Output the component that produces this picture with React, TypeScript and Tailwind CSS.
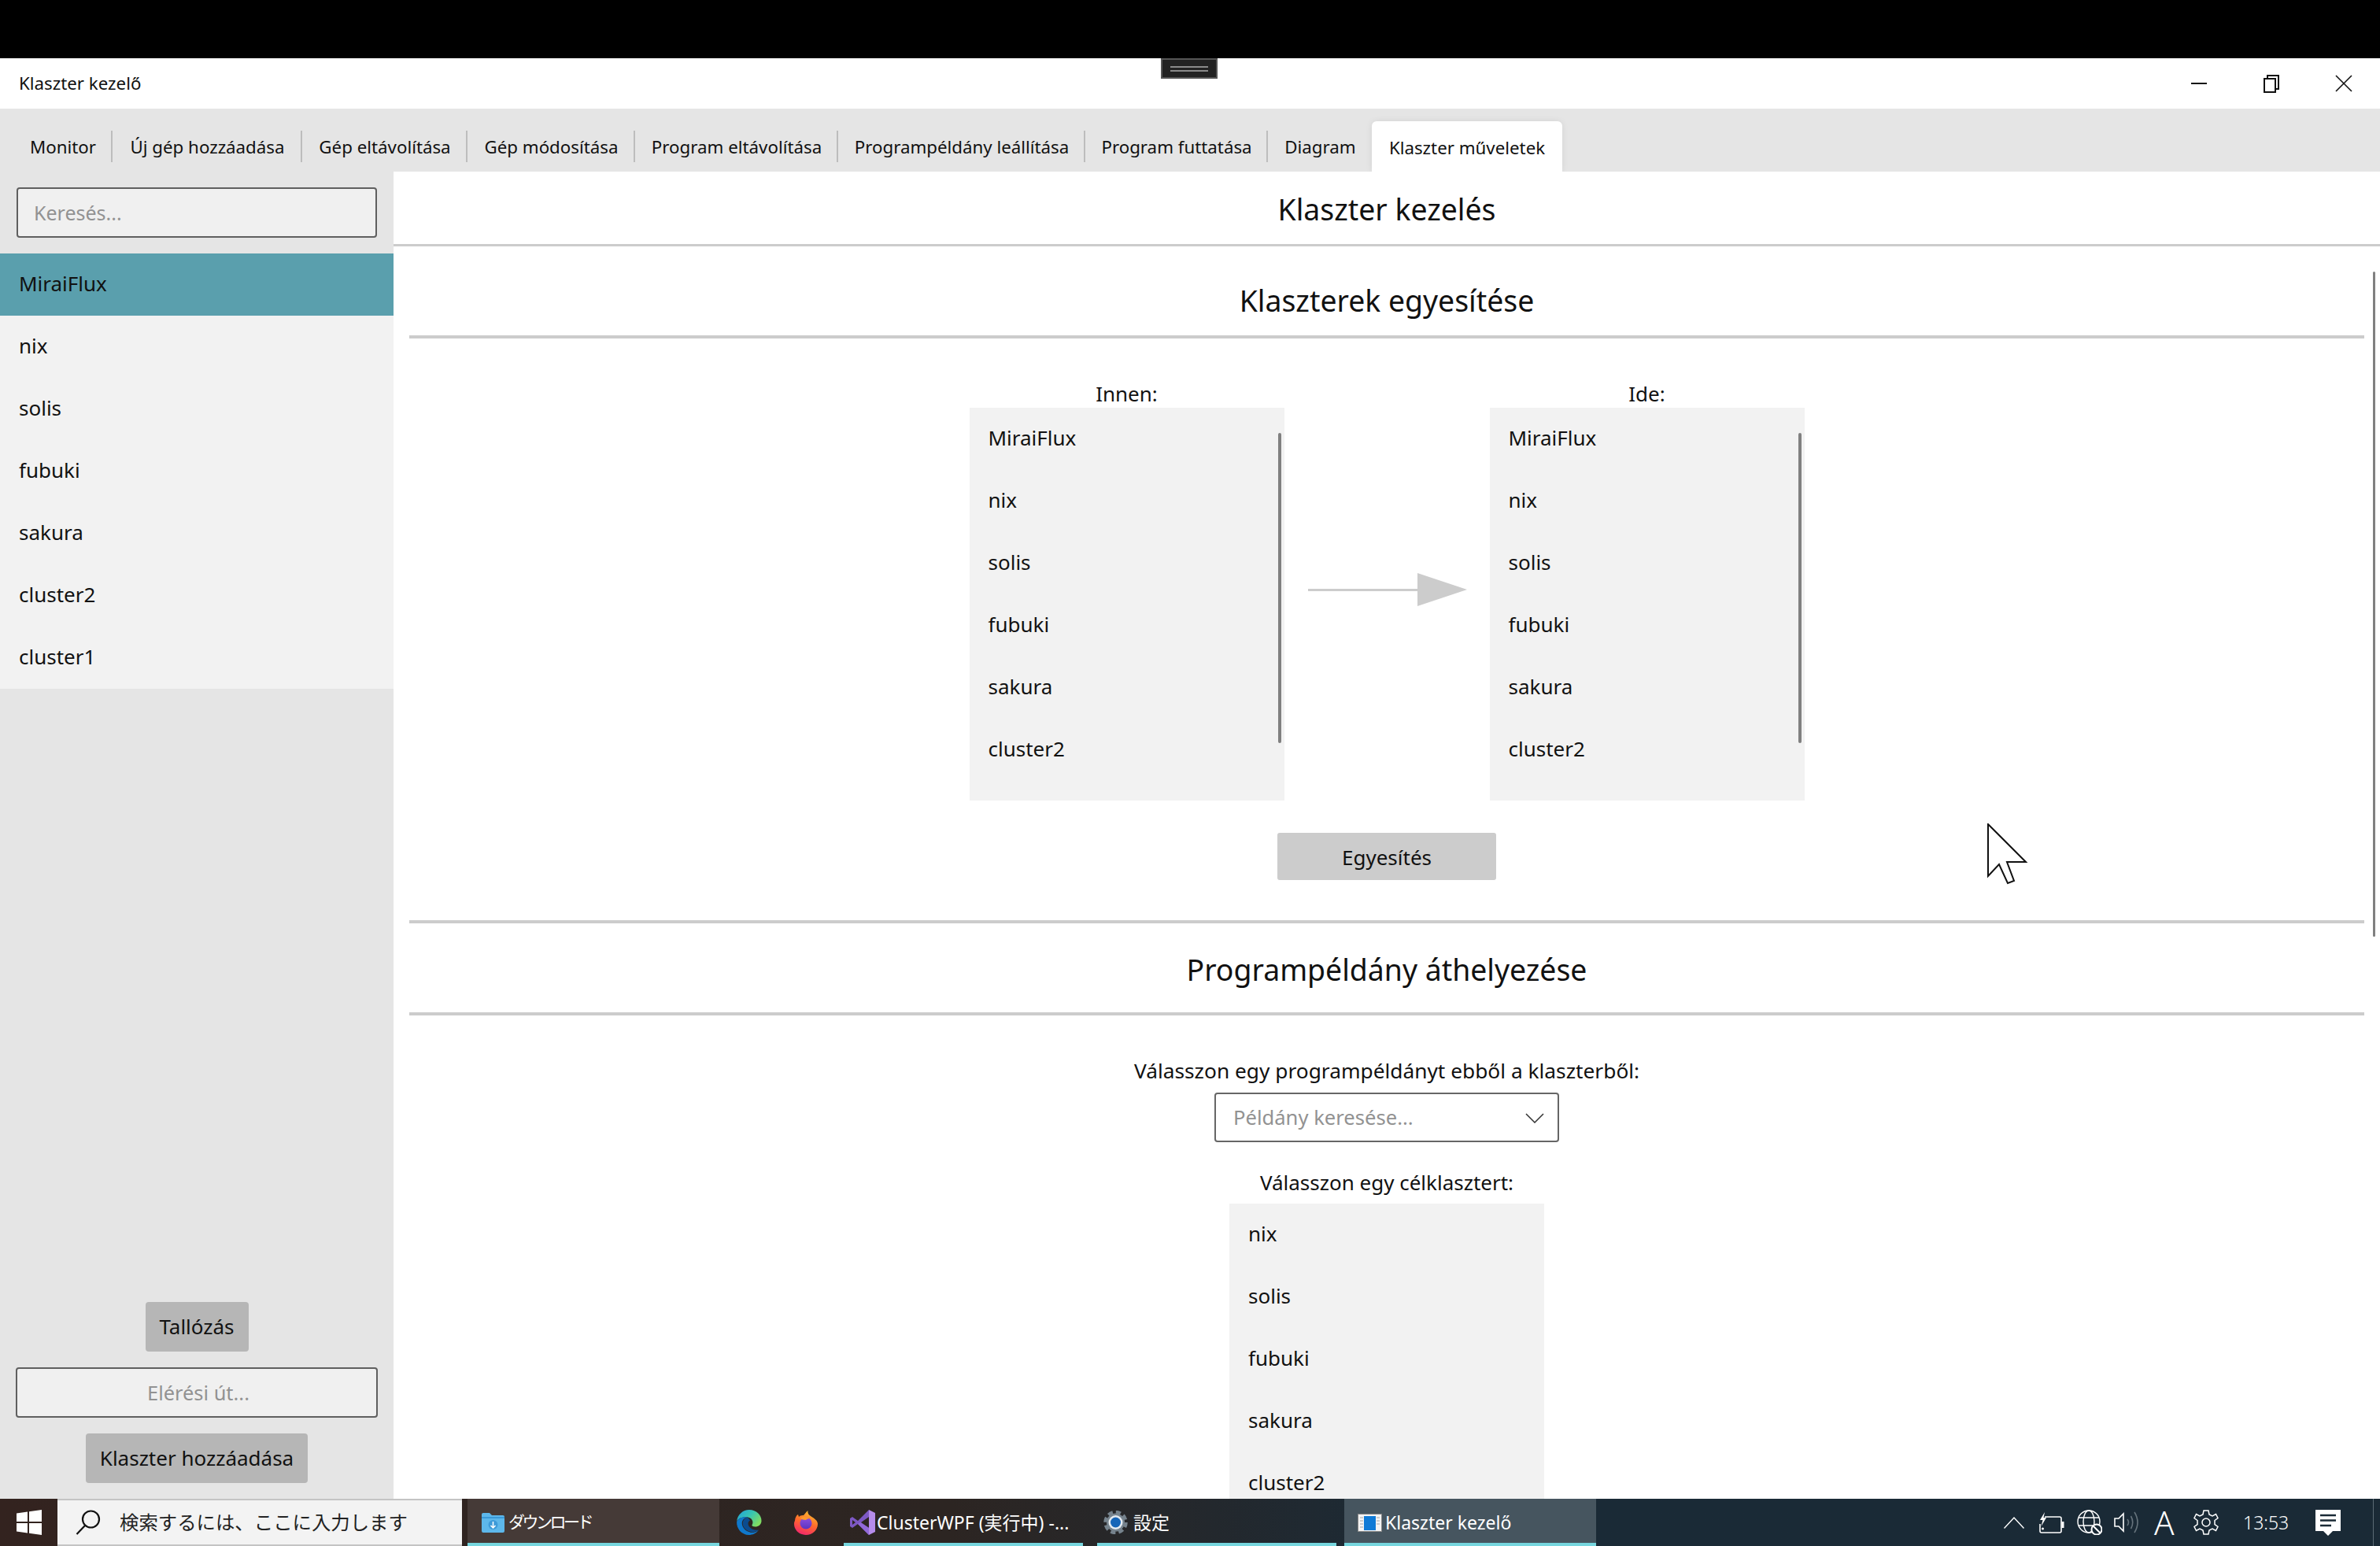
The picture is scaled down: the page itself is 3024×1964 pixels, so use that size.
import React from 'react';

const tabs = [
  { label: 'Monitor', width: 'w-[129px] pl-[5px] border-r-2' },
  { label: 'Új gép hozzáadása', width: 'w-[241px] pl-[2px] border-r-2' },
  { label: 'Gép eltávolítása', width: 'w-[210px] pl-[2px] border-r-2' },
  { label: 'Gép módosítása', width: 'w-[213px] pl-[2px] border-r-2' },
  { label: 'Program eltávolítása', width: 'w-[258px] pl-[2px] border-r-2' },
  { label: 'Programpéldány leállítása', width: 'w-[314px] pl-[2px] border-r-2' },
  { label: 'Program futtatása', width: 'w-[232px] pl-[2px] border-r-2' },
  { label: 'Diagram', width: 'w-[131px] pl-[2px]' },
];

const clusters = ['MiraiFlux', 'nix', 'solis', 'fubuki', 'sakura', 'cluster2', 'cluster1'];

const ListRow = ({ name, selected = false }: { name: string; selected?: boolean }) => (
  <div className={`flex h-[79px] shrink-0 items-center pb-[3px] pl-[24px] ${selected ? 'bg-[#5a9fad]' : ''}`}>{name}</div>
);

const ListBox = ({ items, height, scrollbar = false }: { items: string[]; height: string; scrollbar?: boolean }) => (
  <div className={`relative w-[400px] shrink-0 overflow-hidden bg-[#f2f2f2] ${height}`}>
    {items.map((item) => (
      <ListRow key={item} name={item} />
    ))}
    {scrollbar && <div className="absolute top-[32px] right-[4px] h-[394px] w-[4px] rounded-full bg-[#808080]" />}
  </div>
);

const SectionTitle = ({ title, pad }: { title: string; pad: string }) => (
  <div className={`mx-[20px] flex h-[117px] shrink-0 items-center justify-center border-b-4 border-[#cccccc] text-[37.4px] ${pad}`}>
    {title}
  </div>
);

const TaskTile = ({ width, active = false, children }: { width: string; active?: boolean; children: React.ReactNode }) => (
  <div className={`relative flex h-full shrink-0 items-center ${width} ${active ? 'bg-[#46555f]' : ''}`}>
    {children}
    <div className="absolute right-0 bottom-0 left-0 h-[4px] bg-[#76d6de]" />
  </div>
);

const Sidebar = () => (
  <aside className="flex w-[500px] shrink-0 flex-col bg-[#e5e5e5]">
    <div className="mx-[21px] mt-[20px] flex h-[64px] items-center rounded-[4px] border-2 border-[#5f5f5f] bg-[#f0f0f0] pt-[1px] pl-[20px] text-[25px] text-[#929292]">
      Keresés...
    </div>
    <div className="mt-[20px] bg-[#f2f2f2]">
      {clusters.map((name, index) => (
        <ListRow key={name} name={name} selected={index === 0} />
      ))}
    </div>
    <div className="mt-auto flex flex-col items-center gap-[20px] pb-[20px]">
      <div className="flex h-[63px] w-[131px] items-center justify-center rounded-[4px] bg-[#b6b6b6]">Tallózás</div>
      <div className="flex h-[64px] w-[460px] items-center justify-center rounded-[4px] border-2 border-[#5f5f5f] bg-[#f0f0f0] pl-[4px] text-[25.4px] text-[#929292]">
        Elérési út...
      </div>
      <div className="flex h-[63px] w-[282px] items-center justify-center rounded-[4px] bg-[#b6b6b6]">Klaszter hozzáadása</div>
    </div>
  </aside>
);

const Content = () => (
  <main className="relative flex min-w-0 flex-1 flex-col overflow-hidden bg-white">
    <div className="flex h-[95px] shrink-0 items-center justify-center border-b-[3px] border-[#cccccc] pt-[4px] text-[37.4px]">
      Klaszter kezelés
    </div>

    <SectionTitle title="Klaszterek egyesítése" pad="pt-[26px]" />
    <div className="mt-[52px] flex shrink-0 justify-center">
      <div className="flex w-[400px] flex-col items-center">
        <div className="h-[36px] leading-[36px]">Innen:</div>
        <ListBox items={clusters.slice(0, 6)} height="h-[499px]" scrollbar />
      </div>
      <div className="flex w-[261px] items-center justify-center pt-[36px] pb-[37px] pl-[1px]">
        <svg width="202" height="42" viewBox="0 0 202 42" fill="#cccccc">
          <rect x="0" y="20" width="140" height="3" />
          <polygon points="139,0 202,21 139,42" />
        </svg>
      </div>
      <div className="flex w-[400px] flex-col items-center">
        <div className="h-[36px] leading-[36px]">Ide:</div>
        <ListBox items={clusters.slice(0, 6)} height="h-[499px]" scrollbar />
      </div>
    </div>
    <div className="mx-auto mt-[41px] flex h-[60px] w-[278px] shrink-0 items-center justify-center rounded-[3px] bg-[#cccccc] pt-[2px]">
      Egyesítés
    </div>
    <div className="mx-[20px] mt-[51px] h-[4px] shrink-0 bg-[#cccccc]" />

    <SectionTitle title="Programpéldány áthelyezése" pad="pt-[6px]" />
    <div className="mt-[52px] h-[36px] shrink-0 text-center text-[26.3px] leading-[36px]">
      Válasszon egy programpéldányt ebből a klaszterből:
    </div>
    <div className="mx-auto mt-[10px] flex h-[63px] w-[438px] shrink-0 items-center justify-between rounded-[4px] border-2 border-[#666666] pt-[1px] pr-[17px] pl-[22px] text-[25.6px] text-[#929292]">
      Példány keresése...
      <svg width="24" height="13" viewBox="0 0 24 13" fill="none" stroke="#333333" strokeWidth="1.5">
        <polyline points="1,1 12,12 23,1" />
      </svg>
    </div>
    <div className="mt-[33px] h-[36px] shrink-0 text-center leading-[36px]">Válasszon egy célklasztert:</div>
    <div className="mx-auto mt-[9px]">
      <ListBox items={clusters.slice(1, 6)} height="h-[400px]" />
    </div>

    {/* Page scrollbar */}
    <div className="absolute top-[127px] right-[6px] h-[845px] w-[3px] rounded-full bg-[#808080]" />

    {/* Mouse pointer */}
    <svg className="absolute top-[828px] left-[2024px]" width="54" height="78" viewBox="0 0 54 78" fill="white" stroke="#111111" strokeWidth="2">
      <path d="M2 1 V67 L16 52 L27 76 L35 73 L26 49 H50 Z" />
    </svg>
  </main>
);

const EdgeIcon = () => (
  <svg width="33" height="32" viewBox="0 0 32 32" className="shrink-0">
    <defs>
      <linearGradient id="edge-top" x1="0" y1="0" x2="1" y2="0.6">
        <stop offset="0" stopColor="#1f9fe0" />
        <stop offset="0.55" stopColor="#38c6b0" />
        <stop offset="1" stopColor="#7fdc62" />
      </linearGradient>
    </defs>
    <path d="M0.6 15 C1.5 6 8.5 0 16.5 0 C25.5 0 32 6.5 32 14 C32 19 28 21.5 24 21.5 C21.5 21.5 20 20.5 19.8 19.5 C22 17 21.5 11 15 9.5 C8 8.5 2 11 0.6 15 Z" fill="url(#edge-top)" />
    <path d="M0.6 15 C3 10.5 9 8.5 14 9.5 C9 10.5 6.5 14.5 7.5 19 C9 26 17 30 23 28.5 C25 28 26.5 27 28.5 25.5 C25.5 30 20.5 32 16 32 C7 32 0 24 0.6 15 Z" fill="#0f78cc" />
    <path d="M14 9.5 C9.5 11 7.5 15 8.5 19.5 C10 25.5 17 29 23 28 C25 27.6 27 26.6 28.5 25.5 C24.5 26.5 19 25 16.5 21.5 C14.5 18.5 14.5 15 17.5 13.5 C16.5 11.5 15.5 10.5 14 9.5 Z" fill="#0b4c8f" />
  </svg>
);

const FirefoxIcon = () => (
  <svg width="30" height="31" viewBox="0 0 30 31" className="shrink-0">
    <defs>
      <linearGradient id="fx-body" x1="0.7" y1="0" x2="0.3" y2="1">
        <stop offset="0" stopColor="#ffc42e" />
        <stop offset="0.5" stopColor="#ff6a2c" />
        <stop offset="1" stopColor="#f2246e" />
      </linearGradient>
      <linearGradient id="fx-globe" x1="0.5" y1="0" x2="0.5" y2="1">
        <stop offset="0" stopColor="#8f4fe0" />
        <stop offset="1" stopColor="#5a35c0" />
      </linearGradient>
    </defs>
    <path d="M1 13 C1 9 3 6 5 5 L6 8 C8 6 10 6 12 6 C14 4 15 2 17.5 0 C17 3 18 5 21 7 C26 10 30 13 30 17 C30 25 23 31 15 31 C7 31 0 25 0 17 C0 15 0.4 14 1 13 Z" fill="url(#fx-body)" />
    <circle cx="15" cy="16" r="7.5" fill="url(#fx-globe)" />
    <path d="M8 10 C11 7 17 8 20 10 C17 10 16 11 15 12 C12 12 10 11 8 10 Z" fill="#ff9a2c" />
  </svg>
);

const VisualStudioIcon = () => (
  <svg width="32" height="32" viewBox="0 0 32 32" className="shrink-0">
    <path fillRule="evenodd" d="M0 11 L3 9 L10 14 L24 0 V9 L14 16 L24 23 V32 L10 18 L3 23 L0 21 Z M3 13 V19 L7 16 Z" fill="#7d58c4" />
    <path d="M24 0 L32 4 V28 L24 32 Z" fill="#b58ceb" />
    <path d="M24 23 V32 L10 18 L13 16 Z" fill="#9269d8" />
  </svg>
);

const SettingsAppIcon = () => (
  <svg width="31" height="30" viewBox="0 0 31 30" className="shrink-0">
    <circle cx="15.5" cy="15" r="11.5" fill="#76838d" />
    <circle cx="15.5" cy="15" r="13" fill="none" stroke="#76838d" strokeWidth="4.5" strokeDasharray="6.2 4" />
    <circle cx="15.5" cy="15" r="9" fill="#e4ebf1" />
    <circle cx="15.5" cy="15" r="6.5" fill="#1565b8" />
  </svg>
);

const WindowAppIcon = () => (
  <svg width="31" height="23" viewBox="0 0 31 23" className="shrink-0">
    <rect x="0.5" y="0.5" width="30" height="22" fill="#f4f4f4" stroke="#8a8a8a" />
    <rect x="8" y="3" width="15" height="18" fill="#0f7ad6" />
    <path d="M3 5 H7 M3 9 H7 M3 13 H7 M3 17 H7 M24 5 H28 M24 9 H28 M24 13 H28" stroke="#a5a5a5" strokeWidth="1.2" />
  </svg>
);

const Taskbar = () => (
  <footer className="flex h-[60px] shrink-0 items-center bg-gradient-to-r from-[#33231f] via-[#2c2522] via-40% to-[#1a2a36] to-60% text-[23px] text-white">
    <div className="flex w-[73px] shrink-0 items-center justify-center">
      <svg width="32" height="32" viewBox="0 0 32 32" fill="white">
        <polygon points="0,4.5 14,2.6 14,15 0,15" />
        <polygon points="16,2.3 32,0 32,15 16,15" />
        <polygon points="0,17 14,17 14,29.4 0,27.5" />
        <polygon points="16,17 32,17 32,32 16,29.7" />
      </svg>
    </div>
    <div className="flex h-full w-[514px] shrink-0 items-center border-y-2 border-[#c4c4c4] bg-[#f3f3f3] pl-[23px] text-[24.4px] text-[#222222]">
      <svg width="32" height="32" viewBox="0 0 32 32" fill="none" stroke="#111111" strokeWidth="2.2" className="mr-[24px] shrink-0">
        <circle cx="19.5" cy="12" r="10.5" />
        <line x1="12" y1="20" x2="1.5" y2="31" />
      </svg>
      検索するには、ここに入力します
    </div>

    <div className="ml-[7px] h-full">
      <TaskTile width="w-[320px] bg-[#453a37]">
        <svg width="29" height="25" viewBox="0 0 29 25" className="mr-[5px] ml-[18px] shrink-0">
          <path d="M0 2 Q0 0 2 0 H10 L13 3 H27 Q29 3 29 5 V23 Q29 25 27 25 H2 Q0 25 0 23 Z" fill="#5db7ea" />
          <path d="M0 6 H29" stroke="#2f8fd0" strokeWidth="1.5" />
          <circle cx="14.5" cy="15" r="6" fill="#3d9ad8" />
          <path d="M14.5 11 V19 M11.5 16 L14.5 19 L17.5 16" stroke="white" strokeWidth="1.5" fill="none" />
        </svg>
        <span className="text-[21px] tracking-[-3.5px]">ダウンロード</span>
      </TaskTile>
    </div>

    <div className="ml-[21px] shrink-0">
      <EdgeIcon />
    </div>
    <div className="ml-[41px] shrink-0">
      <FirefoxIcon />
    </div>

    <div className="ml-[33px] h-full">
      <TaskTile width="w-[304px]">
        <div className="mr-[2px] ml-[8px]">
          <VisualStudioIcon />
        </div>
        ClusterWPF (実行中) -...
      </TaskTile>
    </div>
    <div className="ml-[18px] h-full">
      <TaskTile width="w-[304px]">
        <div className="mr-[7px] ml-[8px]">
          <SettingsAppIcon />
        </div>
        設定
      </TaskTile>
    </div>
    <div className="ml-[10px] h-full">
      <TaskTile width="w-[320px]" active>
        <div className="mr-[4px] ml-[17px]">
          <WindowAppIcon />
        </div>
        Klaszter kezelő
      </TaskTile>
    </div>

    {/* Tray */}
    <div className="ml-[518px] flex h-full shrink-0 items-center">
      <svg width="26" height="15" viewBox="0 0 26 15" fill="none" stroke="white" strokeWidth="1.4">
        <polyline points="0.5,14.5 13,1 25.5,14.5" />
      </svg>
      <svg width="32" height="27" viewBox="0 0 32 27" fill="none" stroke="white" strokeWidth="1.6" className="ml-[19px]">
        <path d="M7 6 H26 Q28 6 28 8 V24 Q28 26 26 26 H3 Q1 26 1 24 V15" />
        <path d="M28.5 12 H31.5 V20 H28.5 Z" fill="white" stroke="none" />
        <path d="M7 0 L1 10 H4.5 L2.5 18 L9 7 H5.5 Z" fill="white" stroke="none" />
        <circle cx="4.5" cy="21" r="1.5" fill="white" stroke="none" />
      </svg>
      <svg width="32" height="32" viewBox="0 0 32 32" fill="none" stroke="white" strokeWidth="1.4" className="ml-[16px]">
        <circle cx="15" cy="15" r="14" />
        <ellipse cx="15" cy="15" rx="7" ry="14" />
        <path d="M2 10 H28 M2 20 H28" />
        <circle cx="25" cy="25" r="6.5" fill="#1a2a36" strokeWidth="2" />
        <line x1="20.5" y1="20.5" x2="29.5" y2="29.5" strokeWidth="2" />
      </svg>
      <svg width="33" height="28" viewBox="0 0 33 28" fill="none" strokeWidth="1.6" className="ml-[15px]">
        <path d="M1 9 H6 L12 3 V25 L6 19 H1 Z" stroke="white" />
        <path d="M17 10 Q20 14 17 18" stroke="#66737c" />
        <path d="M21.5 6 Q26 14 21.5 22" stroke="#66737c" />
        <path d="M26 1 Q34 14 26 27" stroke="#66737c" />
      </svg>
      <span className="ml-[18px] w-[24px] text-center text-[42px] leading-none font-light">A</span>
      <svg width="32" height="32" viewBox="0 0 32 32" fill="none" stroke="white" strokeWidth="1.5" className="ml-[26px]">
        <circle cx="16" cy="16" r="5" />
        <path d="M13 1 H19 L20 6 L24 8 L28.5 5.5 L31 10.5 L27 13.5 V18.5 L31 21.5 L28.5 26.5 L24 24 L20 26 L19 31 H13 L12 26 L8 24 L3.5 26.5 L1 21.5 L5 18.5 V13.5 L1 10.5 L3.5 5.5 L8 8 L12 6 Z" />
      </svg>
      <span className="ml-[31px] w-[54px] text-[23px] font-light">13:53</span>
      <svg width="32" height="33" viewBox="0 0 32 33" className="ml-[38px]">
        <path d="M0 0 H32 V27 H22 L16 33 L10 27 H0 Z" fill="white" />
        <path d="M6 7 H26 M6 13.5 H26 M6 20 H20" stroke="#1a2a36" strokeWidth="2.5" />
      </svg>
      <div className="ml-[41px] h-full w-[1px] bg-[#5a6a74]" />
    </div>
  </footer>
);

export default function App() {
  return (
    <div className="relative flex h-[1964px] w-[3024px] flex-col overflow-hidden bg-black font-['Noto_Sans','Noto_Sans_CJK_JP',sans-serif] text-[26px] text-[#111111]">
      <div className="h-[74px] shrink-0 bg-black" />

      <header className="relative flex h-[64px] shrink-0 items-center bg-white pl-[24px] text-[22.3px]">
        Klaszter kezelő
        <div className="absolute top-0 left-[1475px] flex h-[26px] w-[72px] flex-col items-center justify-center gap-[3px] border-2 border-[#555555] bg-[#222222]">
          <div className="h-[2px] w-[48px] bg-[#8a8a8a]" />
          <div className="h-[2px] w-[48px] bg-[#8a8a8a]" />
        </div>
        <div className="ml-auto flex items-center">
          <svg width="92" height="24" viewBox="0 0 92 24" stroke="#111111" fill="none" strokeWidth="2">
            <line x1="36" y1="12" x2="56" y2="12" />
          </svg>
          <svg width="92" height="24" viewBox="0 0 92 24" stroke="#111111" fill="none" strokeWidth="2">
            <rect x="37" y="6" width="14" height="17" />
            <path d="M41 6 V2 H55 V19 H51" />
          </svg>
          <svg width="92" height="24" viewBox="0 0 92 24" stroke="#111111" fill="none" strokeWidth="1.6">
            <path d="M36 2 L56 22 M56 2 L36 22" />
          </svg>
        </div>
      </header>

      <nav className="flex h-[80px] shrink-0 items-end bg-[#e5e5e5] pl-[14px] text-[22.3px]">
        {tabs.map((tab) => (
          <div key={tab.label} className={`mb-[12px] flex h-[40px] items-center justify-center border-[#bdbdbd] pt-[2px] ${tab.width}`}>
            {tab.label}
          </div>
        ))}
        <div className="ml-[1px] flex h-[64px] w-[242px] items-center justify-center rounded-t-[6px] bg-white pt-[4px] shadow-[0_0_8px_rgba(0,0,0,0.08)]">
          Klaszter műveletek
        </div>
      </nav>

      <div className="flex min-h-0 flex-1">
        <Sidebar />
        <Content />
      </div>

      <Taskbar />
    </div>
  );
}
